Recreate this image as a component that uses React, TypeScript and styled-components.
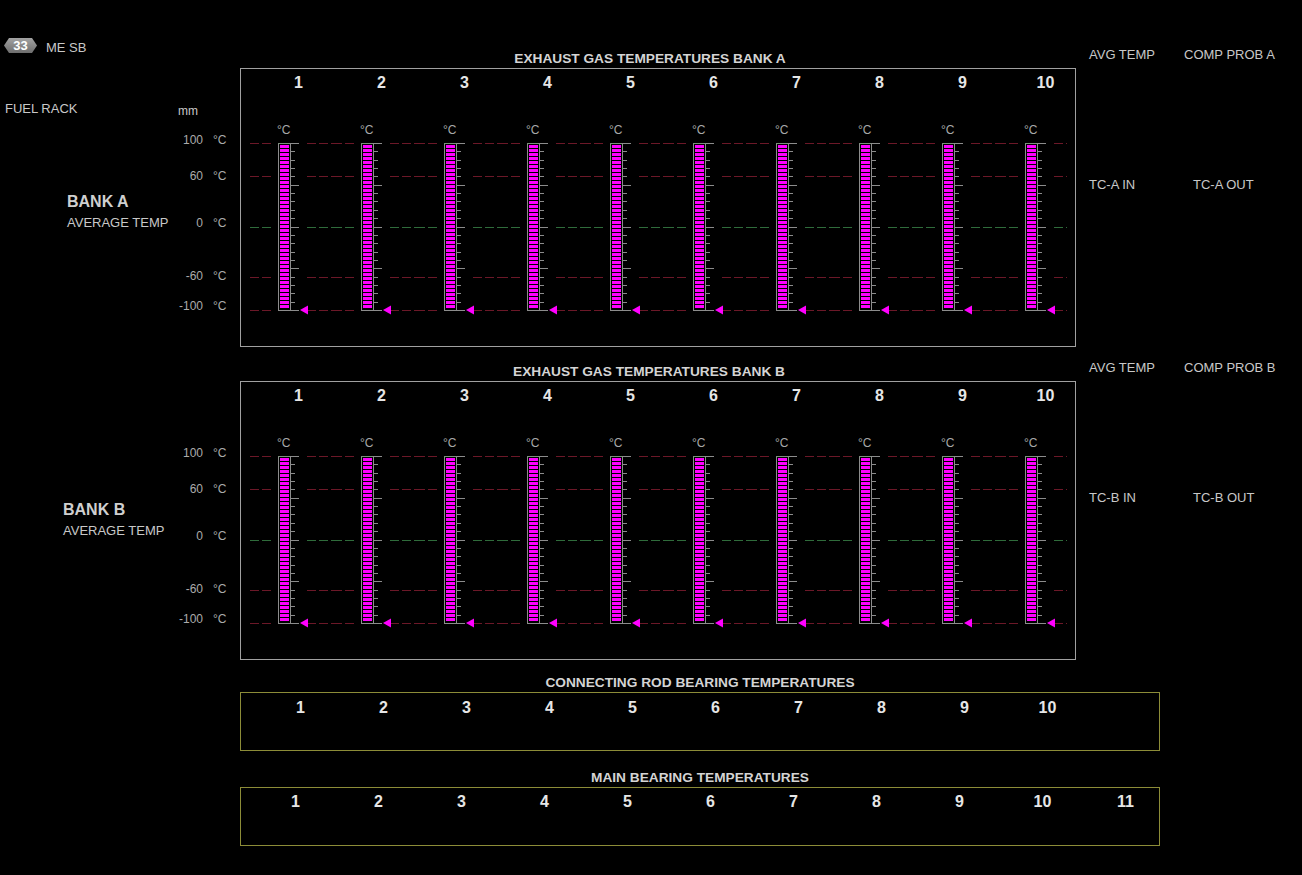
import React from "react";
import styled, { createGlobalStyle } from "styled-components";

const RED = "#6c1828";
const GREEN = "#2f6c3b";
const MAGENTA = "#ff00ff";
const SCALE = "#8c8c8c";

const GlobalStyle = createGlobalStyle`
  html, body {
    margin: 0;
    padding: 0;
    background: #000;
  }
  body {
    font-family: "Liberation Sans", Arial, sans-serif;
  }
`;

const Screen = styled.div`
  width: 1302px;
  height: 875px;
  background: #000;
  color: #c8c8c8;
  overflow: hidden;
  display: flex;
  flex-direction: column;
`;

const Header = styled.div`
  height: 46px;
  box-sizing: border-box;
  padding: 38px 0 0 4px;
  display: flex;
  align-items: flex-start;
  gap: 9px;
`;

const Badge = styled.span`
  width: 33px;
  height: 15px;
  display: flex;
  align-items: center;
  justify-content: center;
  background: linear-gradient(#a2a2a2, #6e6e6e);
  clip-path: polygon(5px 0, calc(100% - 5px) 0, 100% 50%, calc(100% - 5px) 100%, 5px 100%, 0 50%);
  color: #fff;
  font-size: 13px;
  font-weight: bold;
`;

const HeaderText = styled.span`
  font-size: 13px;
  line-height: 15px;
  margin-top: 2px;
`;

const Section = styled.div<{ $top: number }>`
  display: flex;
  margin-top: ${(p) => p.$top}px;
`;

const LeftCol = styled.div`
  width: 240px;
  flex-shrink: 0;
  display: flex;
`;

const InfoCol = styled.div`
  width: 175px;
  display: flex;
  flex-direction: column;
`;

const FuelRack = styled.div`
  margin-top: 55px;
  padding-left: 5px;
  font-size: 13px;
  line-height: 16px;
  white-space: nowrap;
`;

const BankGroup = styled.div<{ $top: number; $left: number }>`
  margin-top: ${(p) => p.$top}px;
  padding-left: ${(p) => p.$left}px;
  display: flex;
  flex-direction: column;
`;

const BankName = styled.div`
  font-size: 16px;
  font-weight: bold;
  line-height: 18px;
  color: #cfcfcf;
`;

const BankSub = styled.div`
  margin-top: 4px;
  font-size: 13px;
  line-height: 16px;
  white-space: nowrap;
`;

const AxisCol = styled.div`
  width: 65px;
  padding-top: 58px;
  display: flex;
  flex-direction: column;
`;

const Unit = styled.div`
  height: 14px;
  margin-left: 3px;
  font-size: 12px;
  line-height: 14px;
`;

const AxisRow = styled.div<{ $top: number }>`
  display: flex;
  height: 14px;
  margin-top: ${(p) => p.$top}px;
  font-size: 12px;
  line-height: 14px;
  color: #ababab;
`;

const AxisNum = styled.span`
  width: 28px;
  text-align: right;
`;

const AxisUnit = styled.span`
  margin-left: 10px;
`;

const CenterCol = styled.div`
  display: flex;
  flex-direction: column;
`;

const Title = styled.div<{ $shift: number }>`
  height: 22px;
  box-sizing: border-box;
  display: flex;
  align-items: flex-end;
  justify-content: center;
  padding: 0 ${(p) => p.$shift}px 1px 0;
  font-size: 13.7px;
  font-weight: bold;
  line-height: 16px;
  color: #d4d4d4;
  white-space: nowrap;
`;

const Panel = styled.div`
  width: 836px;
  height: 279px;
  box-sizing: border-box;
  border: 1px solid #a0a0a0;
  overflow: hidden;
`;

const NumberRow = styled.div<{ $pad: number; $top: number }>`
  display: flex;
  padding: ${(p) => p.$top}px 0 0 ${(p) => p.$pad}px;
`;

const NumCell = styled.div`
  width: 83px;
  flex-shrink: 0;
  text-align: center;
  font-size: 16px;
  font-weight: bold;
  line-height: 20px;
  color: #e6e6e6;
`;

const GaugeRow = styled.div`
  display: flex;
  padding-left: 9px;
  margin-top: 30px;
`;

const GaugeCell = styled.div`
  width: 83px;
  flex-shrink: 0;
  display: flex;
  flex-direction: column;
`;

const DegLabel = styled.div`
  height: 14px;
  padding-left: 27px;
  font-size: 12px;
  line-height: 15px;
  color: #a8a8a8;
`;

const SideCol = styled.div`
  padding-left: 13px;
  display: flex;
  flex-direction: column;
`;

const SideRow = styled.div<{ $top: number }>`
  display: flex;
  margin-top: ${(p) => p.$top}px;
`;

const SideLabel = styled.span<{ $w?: number }>`
  width: ${(p) => (p.$w ? `${p.$w}px` : "auto")};
  font-size: 13px;
  line-height: 16px;
  white-space: nowrap;
`;

const BottomPanel = styled.div`
  width: 920px;
  height: 59px;
  box-sizing: border-box;
  border: 1px solid #8c8c38;
`;

const BAR_TOP = 6;
const BAR_BOTTOM = 173;
const yOf = (v: number) => BAR_TOP + ((100 - v) / 200) * (BAR_BOTTOM - BAR_TOP);
const LINES = [100, 60, 0, -60, -100];
const AXIS = [
  { label: "100", top: 15 },
  { label: "60", top: 22 },
  { label: "0", top: 33 },
  { label: "-60", top: 39 },
  { label: "-100", top: 16 },
];

const Gauge = ({ last }: { last?: boolean }) => (
  <svg width={83} height={180} shapeRendering="crispEdges">
    {LINES.map((v) => {
      const y = Math.round(yOf(v)) + 0.5;
      const c = v === 0 ? GREEN : RED;
      return (
        <g key={v} stroke={c} strokeDasharray="9 3">
          <line x1={0} x2={21} y1={y} y2={y} />
          <line x1={57} x2={last ? 70 : 83} y1={y} y2={y} />
        </g>
      );
    })}
    {Array.from({ length: 41 }, (_, i) => (
      <rect key={i} x={30} y={BAR_TOP + 2 + i * 4} width={9} height={3} fill={MAGENTA} />
    ))}
    <line x1={28.5} x2={28.5} y1={BAR_TOP} y2={BAR_BOTTOM + 1} stroke={SCALE} />
    <line x1={28} x2={41} y1={BAR_TOP + 0.5} y2={BAR_TOP + 0.5} stroke="#7c907c" />
    <line x1={28} x2={41} y1={BAR_BOTTOM + 0.5} y2={BAR_BOTTOM + 0.5} stroke={SCALE} />
    <line x1={40.5} x2={40.5} y1={BAR_TOP} y2={BAR_BOTTOM + 1} stroke={SCALE} />
    {Array.from({ length: 21 }, (_, i) => {
      const y = Math.round(BAR_TOP + (i * (BAR_BOTTOM - BAR_TOP)) / 20) + 0.5;
      return <line key={i} x1={40} x2={i % 5 === 0 ? 49 : 45} y1={y} y2={y} stroke={SCALE} />;
    })}
    <polygon
      points={`50,${BAR_BOTTOM} 58,${BAR_BOTTOM - 4.5} 58,${BAR_BOTTOM + 4.5}`}
      fill={MAGENTA}
      shapeRendering="auto"
    />
  </svg>
);

const cylinders = Array.from({ length: 10 }, (_, i) => i + 1);

type BankProps = {
  bank: "A" | "B";
  top: number;
  fuelRack?: boolean;
  infoLeft: number;
  groupTop: number;
  titleShift: number;
};

const Bank = ({ bank, top, fuelRack, infoLeft, groupTop, titleShift }: BankProps) => (
  <Section $top={top}>
    <LeftCol>
      <InfoCol>
        {fuelRack && <FuelRack>FUEL RACK</FuelRack>}
        <BankGroup $top={groupTop} $left={infoLeft}>
          <BankName>BANK {bank}</BankName>
          <BankSub>AVERAGE TEMP</BankSub>
        </BankGroup>
      </InfoCol>
      <AxisCol>
        <Unit>{fuelRack ? "mm" : ""}</Unit>
        {AXIS.map((a) => (
          <AxisRow key={a.label} $top={a.top}>
            <AxisNum>{a.label}</AxisNum>
            <AxisUnit>°C</AxisUnit>
          </AxisRow>
        ))}
      </AxisCol>
    </LeftCol>
    <CenterCol>
      <Title $shift={titleShift}>EXHAUST GAS TEMPERATURES BANK {bank}</Title>
      <Panel>
        <NumberRow $pad={16} $top={4}>
          {cylinders.map((n) => (
            <NumCell key={n}>{n}</NumCell>
          ))}
        </NumberRow>
        <GaugeRow>
          {cylinders.map((n) => (
            <GaugeCell key={n}>
              <DegLabel>°C</DegLabel>
              <Gauge last={n === 10} />
            </GaugeCell>
          ))}
        </GaugeRow>
      </Panel>
    </CenterCol>
    <SideCol>
      <SideRow $top={1}>
        <SideLabel $w={95}>AVG TEMP</SideLabel>
        <SideLabel>COMP PROB {bank}</SideLabel>
      </SideRow>
      <SideRow $top={114}>
        <SideLabel $w={104}>TC-{bank} IN</SideLabel>
        <SideLabel>TC-{bank} OUT</SideLabel>
      </SideRow>
    </SideCol>
  </Section>
);

type BearingProps = {
  title: string;
  count: number;
  top: number;
  pad: number;
  numTop: number;
};

const Bearings = ({ title, count, top, pad, numTop }: BearingProps) => (
  <Section $top={top}>
    <LeftCol />
    <CenterCol>
      <Title $shift={0}>{title}</Title>
      <BottomPanel>
        <NumberRow $pad={pad} $top={numTop}>
          {Array.from({ length: count }, (_, i) => (
            <NumCell key={i}>{i + 1}</NumCell>
          ))}
        </NumberRow>
      </BottomPanel>
    </CenterCol>
  </Section>
);

export default function App() {
  return (
    <>
      <GlobalStyle />
      <Screen>
        <Header>
          <Badge>33</Badge>
          <HeaderText>ME SB</HeaderText>
        </Header>
        <Bank bank="A" top={0} fuelRack infoLeft={67} groupTop={76} titleShift={16} />
        <Bank bank="B" top={12} infoLeft={63} groupTop={142} titleShift={18} />
        <Bearings title="CONNECTING ROD BEARING TEMPERATURES" count={10} top={10} pad={18} numTop={5} />
        <Bearings title="MAIN BEARING TEMPERATURES" count={11} top={14} pad={13} numTop={4} />
      </Screen>
    </>
  );
}
